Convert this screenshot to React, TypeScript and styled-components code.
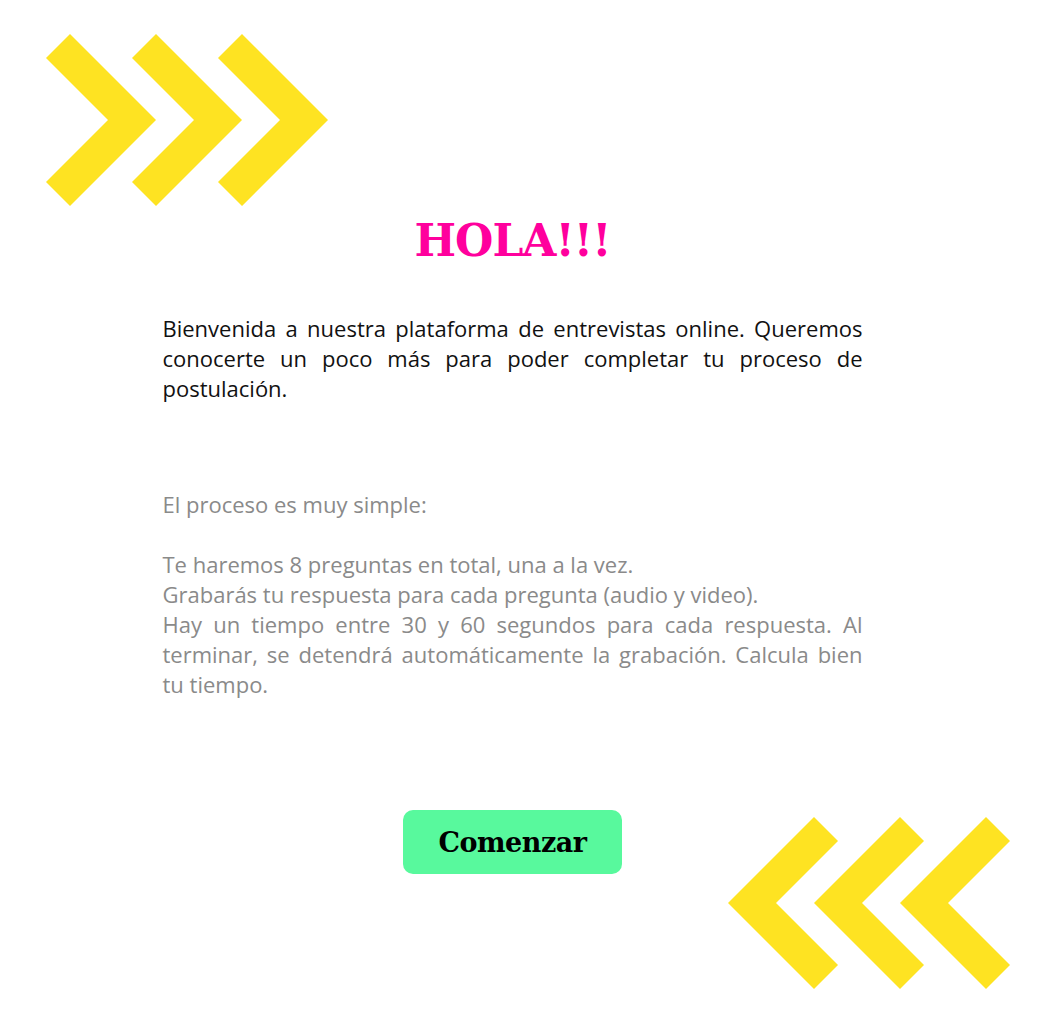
import React from 'react'
import styled, { createGlobalStyle } from 'styled-components'

const GlobalStyle = createGlobalStyle`
  html, body {
    margin: 0;
    padding: 0;
    background: #ffffff;
  }
`

const Page = styled.div`
  width: 1025px;
  display: flex;
  flex-direction: column;
  font-family: 'Open Sans', 'Liberation Sans', sans-serif;
`

const TopDecor = styled.div`
  padding: 34px 0 0 46px;
  height: 172px;
`

const Content = styled.main`
  width: 700px;
  margin: 0 auto;
  display: flex;
  flex-direction: column;
`

const Title = styled.h1`
  margin: 7px 0 0;
  font-family: 'DejaVu Serif', 'Liberation Serif', serif;
  font-weight: 700;
  font-size: 44px;
  line-height: 56px;
  letter-spacing: -1px;
  color: #ff009d;
  text-align: center;
`

const Paragraph = styled.p<{ $muted?: boolean; $gap?: number }>`
  margin: ${p => p.$gap ?? 0}px 0 0;
  font-size: 22px;
  line-height: 30px;
  text-align: justify;
  color: ${p => (p.$muted ? '#8a8a8a' : '#111111')};
`

const Footer = styled.div`
  margin-top: 111px;
  display: grid;
  grid-template-columns: 1fr auto 1fr;
  align-items: start;
`

const StartButton = styled.button`
  grid-column: 2;
  width: 219px;
  height: 64px;
  border: none;
  border-radius: 10px;
  background: #58f99d;
  color: #000000;
  font-family: 'DejaVu Serif', 'Liberation Serif', serif;
  font-weight: 700;
  font-size: 27px;
  letter-spacing: -0.5px;
  cursor: pointer;
`

const BottomDecor = styled.div`
  grid-column: 3;
  justify-self: end;
  margin: 7px 15px 36px 0;
  height: 172px;
`

const CHEVRON = 'M0 24 L24 0 L110 86 L24 172 L0 148 L62 86 Z'

const Chevrons: React.FC<{ flip?: boolean }> = ({ flip }) => (
  <svg width="282" height="172" viewBox="0 0 282 172">
    <g fill="#fee322" transform={flip ? 'translate(282 0) scale(-1 1)' : undefined}>
      {[0, 86, 172].map(x => (
        <path key={x} d={CHEVRON} transform={`translate(${x} 0)`} />
      ))}
    </g>
  </svg>
)

const App: React.FC = () => {
  return (
    <Page>
      <GlobalStyle />
      <TopDecor>
        <Chevrons />
      </TopDecor>
      <Content>
        <Title>HOLA!!!</Title>
        <Paragraph $gap={44}>
          Bienvenida a nuestra plataforma de entrevistas online. Queremos conocerte un poco más para
          poder completar tu proceso de postulación.
        </Paragraph>
        <Paragraph $muted $gap={86}>
          El proceso es muy simple:
        </Paragraph>
        <Paragraph $muted $gap={30}>
          Te haremos 8 preguntas en total, una a la vez.
          <br />
          Grabarás tu respuesta para cada pregunta (audio y video).
          <br />
          Hay un tiempo entre 30 y 60 segundos para cada respuesta. Al terminar, se detendrá
          automáticamente la grabación. Calcula bien tu tiempo.
        </Paragraph>
      </Content>
      <Footer>
        <StartButton>Comenzar</StartButton>
        <BottomDecor>
          <Chevrons flip />
        </BottomDecor>
      </Footer>
    </Page>
  )
}

export default App
